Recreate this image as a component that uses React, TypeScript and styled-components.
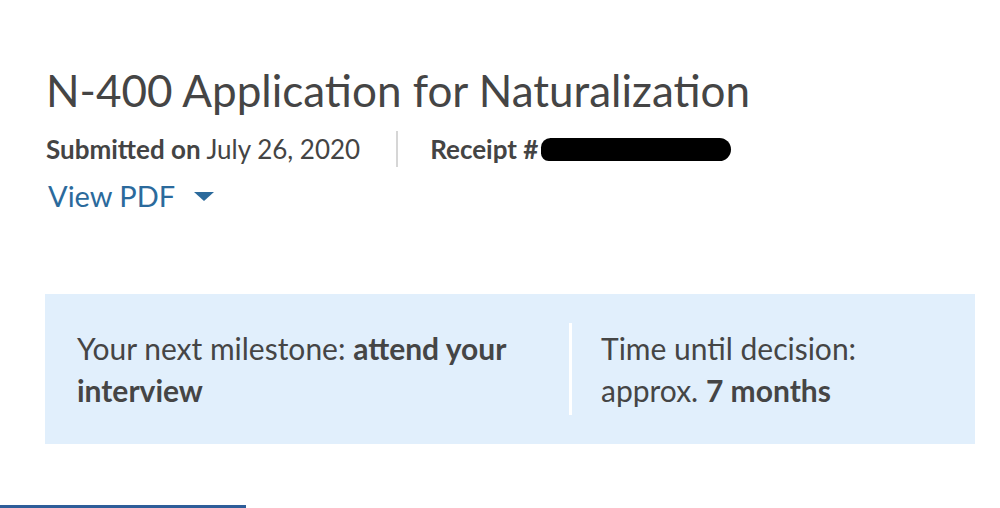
import styled, { createGlobalStyle } from "styled-components";

const GlobalStyle = createGlobalStyle`
  html, body {
    margin: 0;
    padding: 0;
    background: #fff;
  }
`;

const Page = styled.div`
  width: 1000px;
  height: 508px;
  display: flex;
  flex-direction: column;
  box-sizing: border-box;
  padding-top: 62px;
  overflow: hidden;
  font-family: Lato, "Liberation Sans", sans-serif;
  color: #444;
`;

const Header = styled.div`
  padding-left: 46px;
`;

const Title = styled.h1`
  margin: 0;
  font-size: 44px;
  font-weight: 400;
  line-height: 56px;
  color: #454545;
`;

const MetaRow = styled.div`
  display: flex;
  align-items: center;
  margin-top: 13px;
  font-size: 26px;
  line-height: 36px;
`;

const MetaItem = styled.div`
  display: flex;
  align-items: center;
  white-space: nowrap;
`;

const Divider = styled.span`
  width: 2px;
  height: 36px;
  background: #d6d6d6;
  margin: 0 32px 0 36px;
`;

const Strong = styled.b`
  font-weight: 700;
`;

const Redaction = styled.span`
  display: inline-block;
  width: 190px;
  height: 23px;
  margin-left: 3px;
  background: #000;
  border-radius: 10px 12px 12px 8px;
`;

const PdfLink = styled.a`
  display: inline-flex;
  align-items: center;
  gap: 19px;
  margin-top: 9px;
  margin-left: 2px;
  font-size: 29px;
  line-height: 40px;
  color: #2b6a9c;
  text-decoration: none;
`;

const Caret = styled.span`
  width: 0;
  height: 0;
  border-left: 10px solid transparent;
  border-right: 10px solid transparent;
  border-top: 9px solid #2b6a9c;
`;

const Milestones = styled.div`
  display: grid;
  grid-template-columns: 524px 1fr;
  margin: 78px 25px 0 45px;
  padding: 29px 0;
  background: #e1effc;
`;

const Cell = styled.div<{ $divider?: boolean }>`
  padding: 4px 32px 4px ${(p) => (p.$divider ? "29px" : "32px")};
  font-size: 30px;
  line-height: 42px;
  color: #454545;
  border-left: ${(p) => (p.$divider ? "3px solid #fff" : "none")};
`;

const CellText = styled.p<{ $width: number }>`
  margin: 0;
  max-width: ${(p) => p.$width}px;
`;

const BottomBar = styled.div`
  margin-top: auto;
  width: 246px;
  height: 3px;
  background: #2e5d99;
`;

export default function App() {
  return (
    <>
      <GlobalStyle />
      <Page>
        <Header>
          <Title>N-400 Application for Naturalization</Title>
          <MetaRow>
            <MetaItem>
              <Strong>Submitted on</Strong>&nbsp;July 26, 2020
            </MetaItem>
            <Divider />
            <MetaItem>
              <Strong>Receipt #</Strong>
              <Redaction />
            </MetaItem>
          </MetaRow>
          <PdfLink href="#">
            View PDF
            <Caret />
          </PdfLink>
        </Header>
        <Milestones>
          <Cell>
            <CellText $width={460}>
              Your next milestone: <Strong>attend your interview</Strong>
            </CellText>
          </Cell>
          <Cell $divider>
            <CellText $width={300}>
              Time until decision: approx. <Strong>7 months</Strong>
            </CellText>
          </Cell>
        </Milestones>
        <BottomBar />
      </Page>
    </>
  );
}
